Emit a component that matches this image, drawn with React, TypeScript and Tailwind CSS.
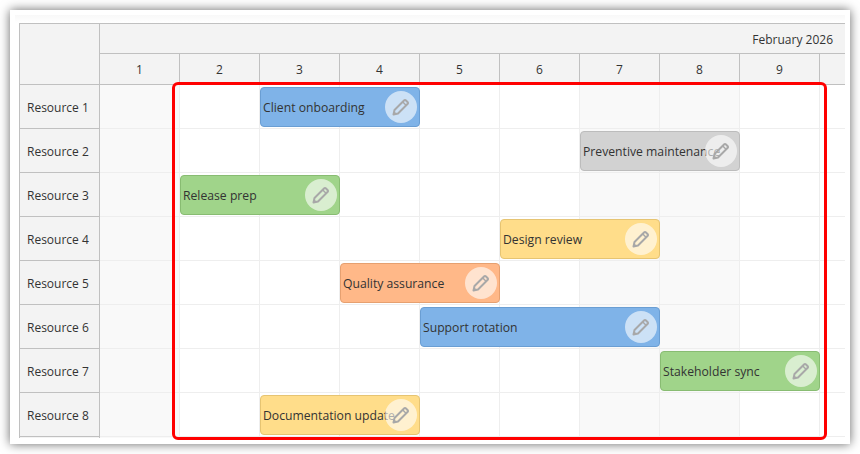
const days = [1, 2, 3, 4, 5, 6, 7, 8, 9, 10];
const weekend = [1, 7, 8];

type Ev = { text: string; place: string; color: string } | null;

const rows: { name: string; ev: Ev }[] = [
  { name: "Resource 1", ev: { text: "Client onboarding", place: "col-start-3 col-span-2", color: "bg-[#7fb3e8] border-[#6a9ed3]" } },
  { name: "Resource 2", ev: { text: "Preventive maintenance", place: "col-start-7 col-span-2", color: "bg-[#d2d2d2] border-[#bcbcbc]" } },
  { name: "Resource 3", ev: { text: "Release prep", place: "col-start-2 col-span-2", color: "bg-[#a0d48a] border-[#88bc72]" } },
  { name: "Resource 4", ev: { text: "Design review", place: "col-start-6 col-span-2", color: "bg-[#ffdd8a] border-[#e6c472]" } },
  { name: "Resource 5", ev: { text: "Quality assurance", place: "col-start-4 col-span-2", color: "bg-[#ffb888] border-[#e6a070]" } },
  { name: "Resource 6", ev: { text: "Support rotation", place: "col-start-5 col-span-3", color: "bg-[#7fb3e8] border-[#6a9ed3]" } },
  { name: "Resource 7", ev: { text: "Stakeholder sync", place: "col-start-8 col-span-2", color: "bg-[#a0d48a] border-[#88bc72]" } },
  { name: "Resource 8", ev: { text: "Documentation update", place: "col-start-3 col-span-2", color: "bg-[#ffdd8a] border-[#e6c472]" } },
  { name: "", ev: null },
];

function PencilIcon() {
  return (
    <svg width="20" height="20" viewBox="0 0 20 20" fill="none">
      <path
        d="M2.5 17.5l1-4.5L13 3.5q1-1 2 0l1.5 1.5q1 1 0 2L7 16.5z"
        stroke="#a8a8a8"
        strokeWidth="2"
        strokeLinejoin="round"
      />
      <path d="M11.8 5l3.2 3.2" stroke="#a8a8a8" strokeWidth="1.5" />
      <path d="M2.5 17.5l1-3 2 2z" fill="#a8a8a8" />
    </svg>
  );
}

function Event({ text, place, color }: { text: string; place: string; color: string }) {
  return (
    <div
      className={`${place} relative z-10 row-start-1 mt-[2px] flex h-[40px] items-center self-start overflow-hidden rounded-[4px] border pl-[2px] pt-[2px] text-[12.2px] ${color}`}
    >
      <span className="whitespace-nowrap text-[#333333]">{text}</span>
      <span className="absolute right-[2px] top-[3px] flex h-[32px] w-[32px] items-center justify-center rounded-full bg-white/60">
        <PencilIcon />
      </span>
    </div>
  );
}

export default function App() {
  return (
    <div
      className="h-[454px] w-[860px] overflow-hidden bg-white p-[10px] text-[12px] text-[#333333]"
      style={{ fontFamily: '"Open Sans", sans-serif' }}
    >
      <div className="relative flex h-[434px] flex-col bg-white pb-[6px] pl-[5px] pr-[5px] pt-[5px] shadow-[0_0_10px_rgba(0,0,0,0.6)]">
        <div className="h-[8px] shrink-0 bg-gradient-to-b from-[#f8f8f8] to-white" />
        <div className="ml-[4px] flex h-[415px] overflow-hidden border-l border-t border-[#c0c0c0]">
          <div className="w-[80px] shrink-0 border-r border-[#c0c0c0] bg-[#f3f3f3]">
            <div className="h-[61px] border-b border-[#c0c0c0]" />
            {rows.map((r, i) => (
              <div key={i} className="flex h-[44px] items-center border-b border-[#c0c0c0] pl-[7px] pt-[3px]">
                {r.name}
              </div>
            ))}
          </div>
          <div className="min-w-0 flex-1 overflow-hidden">
            <div className="w-[800px]">
              <div className="flex h-[30px] w-[745px] items-center justify-end border-b border-[#c0c0c0] bg-[#f3f3f3] pr-[12px] pt-[3px]">
                February 2026
              </div>
              <div className="flex w-[745px] overflow-hidden">
                {days.map((d) => (
                  <div
                    key={d}
                    className="flex h-[31px] w-[80px] shrink-0 items-center justify-center border-b border-r border-[#c0c0c0] bg-[#f3f3f3] pt-[2px]"
                  >
                    {d < 10 ? d : ""}
                  </div>
                ))}
              </div>
              {rows.map((r, i) => (
                <div key={i} className="grid h-[44px] grid-cols-[repeat(10,80px)]">
                  {days.map((d) => (
                    <div
                      key={d}
                      style={{ gridColumnStart: d }}
                      className={`row-start-1 h-[44px] border-b border-r border-[#eeeeee] ${
                        weekend.includes(d) ? "bg-[#f9f9f9]" : "bg-white"
                      }`}
                    />
                  ))}
                  {r.ev && <Event {...r.ev} />}
                </div>
              ))}
            </div>
          </div>
        </div>
        <div className="absolute left-[162px] top-[72px] z-20 h-[358px] w-[655px] rounded-[6px] border-[3px] border-[#ff0000]" />
      </div>
    </div>
  );
}
